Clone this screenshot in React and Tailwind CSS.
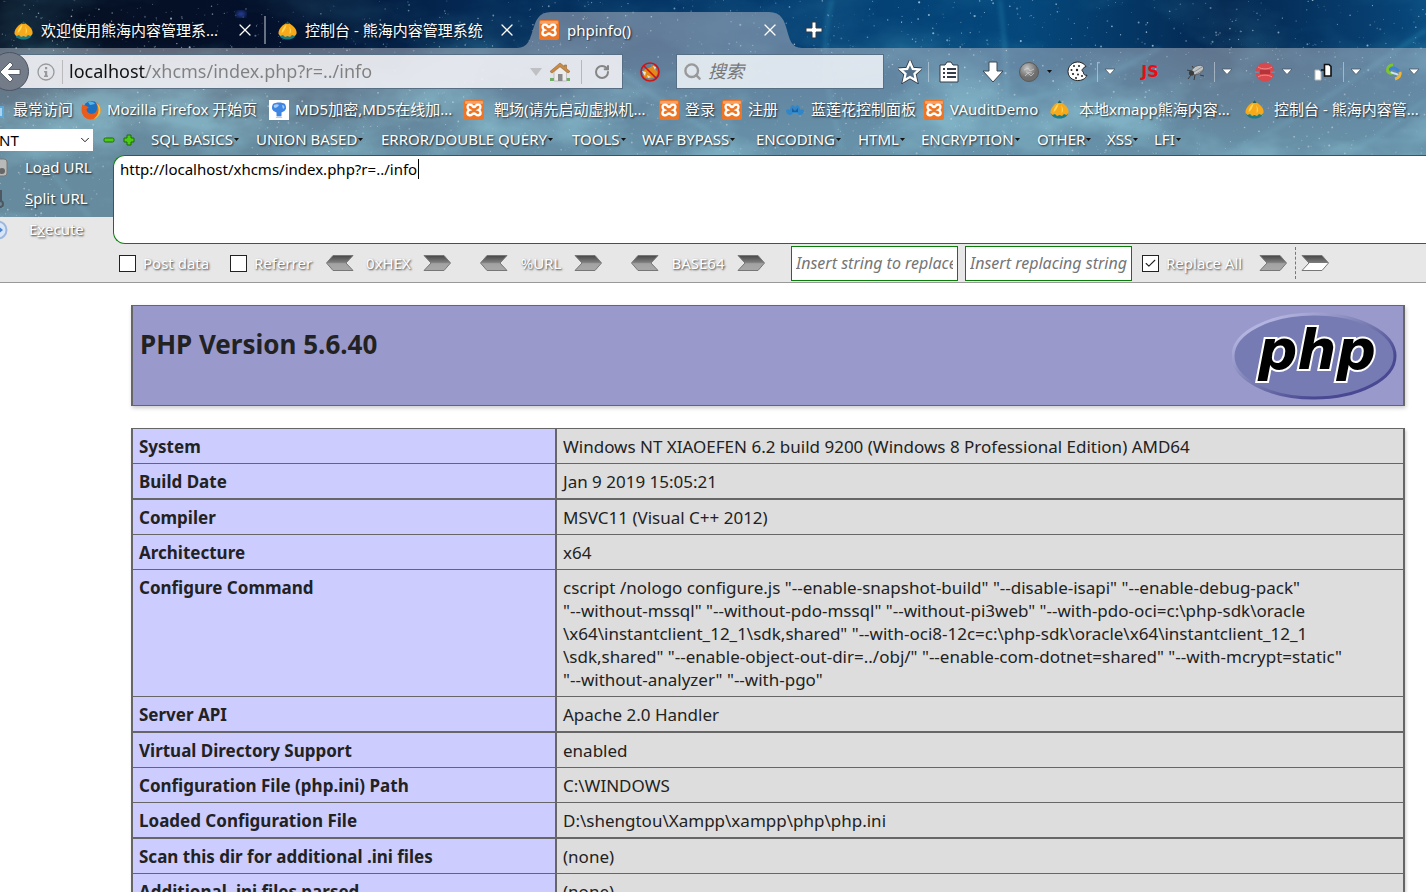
import React from 'react';
import clsx from 'clsx';
import { Search, RotateCw, X, ChevronDown, Check } from 'lucide-react';

const FONT = "font-['Noto_Sans','Noto_Sans_CJK_SC',sans-serif]";
const GLOW = 'text-white [text-shadow:1px_1px_2px_rgba(0,0,0,0.8)]';

const bookmarks = [
  { icon: 'page', label: '最常访问', width: 'w-[96px]' },
  { icon: 'firefox', label: 'Mozilla Firefox 开始页', width: 'w-[188px]' },
  { icon: 'md5', label: 'MD5加密,MD5在线加...', width: 'w-[195px]' },
  { icon: 'xampp', label: '靶场(请先启动虚拟机...', width: 'w-[195px]', wide: true },
  { icon: 'xampp', label: '登录', width: 'w-[63px]' },
  { icon: 'xampp', label: '注册', width: 'w-[63px]' },
  { icon: 'lotus', label: '蓝莲花控制面板', width: 'w-[139px]' },
  { icon: 'xampp', label: 'VAuditDemo', width: 'w-[126px]' },
  { icon: 'bear', label: '本地xmapp熊海内容...', width: 'w-[195px]', wide: true },
  { icon: 'bear', label: '控制台 - 熊海内容管...', width: 'w-[195px]', wide: true },
];

const menus = [
  { label: 'SQL BASICS', width: 'w-[105px]' },
  { label: 'UNION BASED', width: 'w-[125px]' },
  { label: 'ERROR/DOUBLE QUERY', width: 'w-[191px]' },
  { label: 'TOOLS', width: 'w-[70px]' },
  { label: 'WAF BYPASS', width: 'w-[114px]' },
  { label: 'ENCODING', width: 'w-[102px]' },
  { label: 'HTML', width: 'w-[63px]' },
  { label: 'ENCRYPTION', width: 'w-[116px]' },
  { label: 'OTHER', width: 'w-[70px]' },
  { label: 'XSS', width: 'w-[47px]' },
  { label: 'LFI', width: 'w-[47px]' },
];

const info = [
  { name: 'System', value: ['Windows NT XIAOEFEN 6.2 build 9200 (Windows 8 Professional Edition) AMD64'] },
  { name: 'Build Date', value: ['Jan 9 2019 15:05:21'] },
  { name: 'Compiler', value: ['MSVC11 (Visual C++ 2012)'], thick: true },
  { name: 'Architecture', value: ['x64'] },
  {
    name: 'Configure Command',
    value: [
      'cscript /nologo configure.js "--enable-snapshot-build" "--disable-isapi" "--enable-debug-pack"',
      '"--without-mssql" "--without-pdo-mssql" "--without-pi3web" "--with-pdo-oci=c:\\php-sdk\\oracle',
      '\\x64\\instantclient_12_1\\sdk,shared" "--with-oci8-12c=c:\\php-sdk\\oracle\\x64\\instantclient_12_1',
      '\\sdk,shared" "--enable-object-out-dir=../obj/" "--enable-com-dotnet=shared" "--with-mcrypt=static"',
      '"--without-analyzer" "--with-pgo"',
    ],
  },
  { name: 'Server API', value: ['Apache 2.0 Handler'] },
  { name: 'Virtual Directory Support', value: ['enabled'], thick: true },
  { name: 'Configuration File (php.ini) Path', value: ['C:\\WINDOWS'] },
  { name: 'Loaded Configuration File', value: ['D:\\shengtou\\Xampp\\xampp\\php\\php.ini'] },
  { name: 'Scan this dir for additional .ini files', value: ['(none)'], thick: true },
  { name: 'Additional .ini files parsed', value: ['(none)'] },
];

// small seeded generator so the sky is the same on every load
const makeStars = (count) => {
  let seed = 7;
  const rand = () => {
    seed = (seed * 16807) % 2147483647;
    return seed / 2147483647;
  };
  return Array.from({ length: count }, () => ({
    x: rand() * 1426,
    y: rand() * 217,
    r: 0.4 + rand() * rand() * 0.8,
    o: 0.15 + rand() * 0.6,
  }));
};
const stars = makeStars(2600);

const Sky = () => (
  <svg
    className="absolute inset-x-0 top-0 h-[217px] w-full"
    viewBox="0 0 1426 217"
    preserveAspectRatio="xMidYMin slice"
    aria-hidden="true"
  >
    <defs>
      <linearGradient id="sky" x1="0" x2="1" y1="0" y2="0">
        <stop offset="0" stopColor="#071022" />
        <stop offset=".18" stopColor="#04102a" />
        <stop offset=".34" stopColor="#042a56" />
        <stop offset=".55" stopColor="#043c70" />
        <stop offset=".72" stopColor="#05487c" />
        <stop offset=".86" stopColor="#04264f" />
        <stop offset="1" stopColor="#08487c" />
      </linearGradient>
      <linearGradient id="low" x1="0" x2="0" y1="0" y2="1">
        <stop offset=".2" stopColor="#167090" stopOpacity="0" />
        <stop offset=".65" stopColor="#167090" stopOpacity=".75" />
      </linearGradient>
      <linearGradient id="fade" x1="0" x2="0" y1="0" y2="1">
        <stop offset=".15" stopColor="#fff" stopOpacity=".2" />
        <stop offset=".5" stopColor="#fff" />
      </linearGradient>
      <mask id="lower">
        <rect width="1426" height="217" fill="url(#fade)" />
      </mask>
      <filter id="cloud" x="0" y="0" width="100%" height="100%">
        <feTurbulence type="fractalNoise" baseFrequency=".008 .014" numOctaves="5" seed="11" />
        <feColorMatrix values="0 0 0 0 .12  0 0 0 0 .6  0 0 0 0 .76  3 0 0 0 -1.3" />
      </filter>
      <filter id="soft">
        <feGaussianBlur stdDeviation="2" />
      </filter>
    </defs>
    <rect width="1426" height="217" fill="url(#sky)" />
    <rect width="1426" height="217" fill="url(#low)" />
    <g mask="url(#lower)">
      <rect width="1426" height="217" filter="url(#cloud)" opacity=".65" />
    </g>
    <g filter="url(#soft)" fill="none" stroke="#3fb6d8" strokeWidth="3" opacity=".3">
      <path d="M1000 0c4 40 10 80 4 150" />
      <path d="M832 0c-14 50-4 90 10 150" />
      <path d="M1426 30c-60 40-110 80-200 125" />
      <path d="M1426 100c-30 20-50 40-80 55" />
      <path d="M610 60c40 40 90 60 130 95" />
      <path d="M0 120c30 30 60 60 90 97" />
      <path d="M960 110c90-10 140-30 200-62" />
    </g>
    <ellipse cx="241" cy="14" rx="5" ry="3" fill="#3552c8" opacity=".8" filter="url(#soft)" />
    {stars.map((s, i) => (
      <circle key={i} cx={s.x} cy={s.y} r={s.r} fill="#cfe6f5" opacity={s.o} />
    ))}
  </svg>
);

const BearIcon = () => (
  <svg className="size-[19px] shrink-0" viewBox="0 0 19 19">
    <path d="M1 12c1-1 16-1 17 0 0 4-3 6.500-8.500 6.500S1 16 1 12z" fill="#1c7d86" />
    <path d="M9 2 11 2l4 3c3 3 4 5 3.500 8l-2 2-2.500-1-2 2-2.500-1L7 16l-2-2-2.500 1L.5 13C0 10 2 7 4.500 4.500L7.500 2.500z" fill="#f6a91b" />
    <path d="M8 4c-3 2-4 5-4.500 8 2-1 4-4 5-8zM11 5c1 2 1 5 .5 8 2-1 2-5-.5-8z" fill="#ffd957" />
    <path d="M7.500 3 9.500.3 11.800 3z" fill="#20605c" />
  </svg>
);

const XamppIcon = () => (
  <svg className="size-5 shrink-0" viewBox="0 0 20 20">
    <rect width="20" height="20" rx="2" fill="#ee7523" />
    <rect x="1" y="1" width="18" height="3" rx="1" fill="#f5a067" />
    <path
      d="M7.500 5C4.500 4 3 5.500 3.700 8c.3 1 1 1.600 1.800 2-2.600 1-2.900 4.700 0 5.200 2.500.4 2.600-1.700 4.500-1.700s2 2.100 4.500 1.700c2.900-.5 2.600-4.200 0-5.200.8-.4 1.500-1 1.800-2 .7-2.500-.8-4-3.800-3C11.300 5.500 11.500 7 10 7S8.700 5.500 7.500 5z"
      fill="none"
      stroke="#fff"
      strokeWidth="2.400"
    />
  </svg>
);

const FirefoxIcon = () => (
  <svg className="size-5 shrink-0" viewBox="0 0 20 20">
    <circle cx="10.500" cy="9" r="8" fill="#1d6fc0" />
    <path d="M7 2c3-1 6 0 7 2-2 0-3 1-5 1z" fill="#52b4e8" />
    <path d="M1.500 4c.5 1 1.500 1.500 3 1.500L8 7.500 5.500 9c0 4 4 5.500 7 4.500 3-1 4-4 3.500-7 0-2-1-3.500-2-4.500 4 1.500 6 5 5.500 9-.5 5-5 8.500-10 8.500C4.500 19.500.5 15 .5 10c0-2 .3-4 1-6z" fill="#ea5b1c" />
    <path d="M15 2.500c3.500 2 5 5 4.500 9-.5 4-4 7-7 7.500 3-2 5-5 5-9 0-3-1-5.500-2.500-7.500z" fill="#fbc02d" />
  </svg>
);

const Md5Icon = () => (
  <svg className="size-5 shrink-0" viewBox="0 0 20 20">
    <rect width="20" height="20" fill="#fff" />
    <path d="M4 4c3-2 9-2 12 0 1.500 3 1.500 5-.5 7l-3 1.500V16h-5v-3.500L4.500 11C2.500 9 2.500 7 4 4z" fill="#3f86e4" />
    <path d="M5 5c2-1 4-1 5 0-1 2-3 3-4 3-1-.5-1.500-1.500-1-3zM13 5c1.500 0 2.500 1 2.500 2.500L14 9z" fill="#a9cbf7" />
    <path d="M8 16h4l1.500 2h-7z" fill="#b9cfe8" />
  </svg>
);

const LotusIcon = () => (
  <svg className="size-5 shrink-0" viewBox="0 0 20 20">
    <path d="M1 10c2-1 3-1 4 0 0-3 1-4 3-5l2 2 2-2c2 1 3 2 3 5 1-1 2-1 4 0 0 3-2 5-5 5l-2-2H8l-2 2c-3 0-5-2-5-5z" fill="#2f86c9" />
    <path d="M7 8l3 3 3-3v4H7z" fill="#1b5f9f" />
  </svg>
);

const PageIcon = () => (
  <svg className="size-5 shrink-0" viewBox="0 0 20 20">
    <path d="M4 2h11v4h4v12H4z" fill="#5ea5d8" />
    <path d="M9 8h8v8H9z" fill="#a9d4f0" />
  </svg>
);

const siteIcons = {
  bear: BearIcon,
  xampp: XamppIcon,
  firefox: FirefoxIcon,
  md5: Md5Icon,
  lotus: LotusIcon,
  page: PageIcon,
};

const SiteIcon = ({ name }) => {
  const Icon = siteIcons[name];
  return <Icon />;
};

const Tab = ({ icon, label, className }) => (
  <div className={clsx('flex h-9 items-center', className)}>
    <SiteIcon name={icon} />
    <button className={clsx('ml-2 flex-1 truncate text-left text-[15px]', GLOW)}>{label}</button>
    <button aria-label="Close tab" className="text-white">
      <X size={20} strokeWidth={1.500} />
    </button>
  </div>
);

const TabStrip = () => (
  <div className="flex h-12 items-end">
    <Tab icon="bear" label="欢迎使用熊海内容管理系..." className="w-[255px] pl-3.5" />
    <div className="mb-1 ml-[9px] h-7 w-0.5 bg-white/40" />
    <Tab icon="bear" label="控制台 - 熊海内容管理系统" className="w-[251px] pl-3" />
    <div className="relative h-9 w-[285px]">
      <svg className="absolute inset-0" width="285" height="36" viewBox="0 0 285 36" aria-hidden="true">
        <path d="M0 36C22 36 9 0 34 0H252C277 0 264 36 285 36z" fill="#bcbec8" fillOpacity=".5" />
      </svg>
      <Tab icon="xampp" label="phpinfo()" className="relative mr-[22px] pl-[22px]" />
    </div>
    <button aria-label="New tab" className="flex h-9 w-6 items-center justify-center">
      <svg width="20" height="20" viewBox="0 0 20 20">
        <path d="M8 2h4v6h6v4h-6v6H8v-6H2V8h6z" fill="#fff" stroke="#333a44" strokeWidth="1" />
      </svg>
    </button>
  </div>
);

const Divider = () => <div className="h-5 w-px shrink-0 bg-white/40" />;

const ToolButton = ({ label, className, children }) => (
  <button aria-label={label} className={clsx('flex h-9 shrink-0 items-center justify-center', className)}>
    {children}
  </button>
);

const DropArrow = ({ className }) => (
  <ToolButton label="Show menu" className={className}>
    <svg width="12" height="8" viewBox="0 0 12 8">
      <path d="M1 1h10L6 6.500z" fill="#fff" stroke="#4a5563" strokeWidth=".8" />
    </svg>
  </ToolButton>
);

const NavBar = () => (
  <div className="flex h-[47px] items-center">
    <button
      aria-label="Back"
      className="relative z-10 -ml-[10px] flex size-[39px] shrink-0 items-center justify-center rounded-full border border-[#4b5462] bg-[#747c89]"
    >
      <svg width="22" height="22" viewBox="0 0 22 22">
        <path d="M11 1 1 11l10 10 3-3-4.500-4.500H21v-5H9.500L14 4z" fill="#fff" stroke="#3f4853" strokeWidth=".8" />
      </svg>
    </button>
    <div className="-ml-[13px] flex h-[35px] min-w-0 flex-1 items-center border border-[#566f85] bg-[#f0f0f4]/90 pl-[19px]">
      <svg className="shrink-0" width="20" height="20" viewBox="0 0 20 20">
        <circle cx="10" cy="10" r="8" fill="none" stroke="#999" strokeWidth="1.300" />
        <path d="M9 5h2.200v2.200H9zM8 9h3.200v4.500H12V15H8v-1.500h1V10.500H8z" fill="#999" />
      </svg>
      <div className="ml-1.5 h-6 w-px shrink-0 bg-[#bbb]" />
      <input
        aria-label="Address"
        className="ml-1.5 min-w-0 flex-1 bg-[linear-gradient(to_right,#111_77px,#808080_77px)] bg-clip-text text-[18px] text-transparent outline-none"
        defaultValue="localhost/xhcms/index.php?r=../info"
      />
      <svg className="shrink-0" width="12" height="8" viewBox="0 0 12 8">
        <path d="M0 0h12L6 8z" fill="#bfc0c4" />
      </svg>
      <button aria-label="Home" className="ml-2 shrink-0">
        <svg width="21" height="20" viewBox="0 0 21 20">
          <path d="M0 16h20v3H0z" fill="#6fae63" />
          <path d="M4 10 10 5l6.500 5v9H4z" fill="#ececec" stroke="#aaa" strokeWidth=".6" />
          <path d="M8 12h4.500v7H8z" fill="#8a8a8a" />
          <path d="M10 1 0 9.500l2 1.500 8-6.500 8 6.500 2-1.500-3.500-3V3h-2v1.500z" fill="#c98b45" stroke="#9a6327" strokeWidth=".6" />
        </svg>
      </button>
      <div className="ml-2.5 h-6 w-px shrink-0 bg-[#b5b8bd]" />
      <button aria-label="Reload" className="mx-3 shrink-0 text-[#858585]">
        <RotateCw size={16} strokeWidth={3} />
      </button>
    </div>
    <ToolButton label="Fox blocker" className="w-[53px]">
      <svg width="20" height="20" viewBox="0 0 20 20">
        <path d="M3 11c0-3 3-5 6-5l5-3 1 4c3 2 3 5 1 7-3 3-9 3-12 1z" fill="#e58a1a" />
        <path d="M2 9l4 1-1 4zM13 4l3 1-1 3zM7 13l4 2-3 1z" fill="#f5e7d0" />
        <circle cx="10" cy="10" r="9" fill="none" stroke="#d01414" strokeWidth="1.600" />
        <path d="M3.500 3.500 16.500 16.500" stroke="#d01414" strokeWidth="1.600" />
      </svg>
    </ToolButton>
    <label className="flex h-[35px] w-[208px] shrink-0 items-center border border-[#566f85] bg-[#eaf0f5]/90 pl-1.5 text-[#999]">
      <Search size={19} strokeWidth={3} />
      <input
        aria-label="搜索"
        placeholder="搜索"
        className="ml-1.5 w-40 bg-transparent text-[18px] italic outline-none placeholder:text-[#777]"
      />
    </label>
    <div className="flex h-9 shrink-0 items-center pl-2 pr-0.5">
      <ToolButton label="Bookmark this page" className="w-9">
        <svg width="24" height="24" viewBox="0 0 24 24">
          <path d="m12 2.500 2.800 6.300 6.700.6-5 4.500 1.500 6.700-6-3.600-6 3.600 1.500-6.700-5-4.500 6.700-.6z" fill="none" stroke="#333c48" strokeWidth="4" />
          <path d="m12 2.500 2.800 6.300 6.700.6-5 4.500 1.500 6.700-6-3.600-6 3.600 1.500-6.700-5-4.500 6.700-.6z" fill="#53708a" stroke="#fff" strokeWidth="2.300" />
        </svg>
      </ToolButton>
      <Divider />
      <ToolButton label="Bookmarks list" className="w-10">
        <svg width="22" height="22" viewBox="0 0 22 22">
          <path d="M2 4h5l2-3h4l2 3h5v17H2z" fill="#fff" stroke="#333c48" />
          <path d="M5 7h2v2H5zM9 7h9v2H9zM5 11h2v2H5zM9 11h9v2H9zM5 15h2v2H5zM9 15h9v2H9z" fill="#333c48" />
        </svg>
      </ToolButton>
      <ToolButton label="Downloads" className="w-12">
        <svg width="22" height="22" viewBox="0 0 22 22">
          <path d="M7 1h8v9h6L11 21 1 10h6z" fill="#fff" stroke="#3d4854" />
        </svg>
      </ToolButton>
      <ToolButton label="Proxy" className="w-6">
        <svg width="20" height="20" viewBox="0 0 20 20">
          <defs>
            <radialGradient id="ball" cx=".4" cy=".3">
              <stop offset="0" stopColor="#c4c4c4" />
              <stop offset="1" stopColor="#6e6e6e" />
            </radialGradient>
          </defs>
          <circle cx="10" cy="10" r="9.500" fill="url(#ball)" stroke="#5a5a5a" />
          <path d="M5 8l4-2 2 3 4-2M6 14l3-3 3 3 3-3M7 10l6 1" stroke="#dcdcdc" fill="none" opacity=".6" />
        </svg>
      </ToolButton>
      <ToolButton label="Proxy menu" className="w-4">
        <svg width="5" height="3" viewBox="0 0 5 3">
          <path d="M0 0h5L2.500 3z" fill="#111" />
        </svg>
      </ToolButton>
      <ToolButton label="Cookies" className="w-10">
        <svg width="21" height="21" viewBox="0 0 21 21">
          <path d="M15 2C9-1 1 3 1 10.500S9 21.500 16 18.500c2-1 3.500-3 4-4.500-2 1-4-1-3.500-3-2-.5-2-3 0-3.500 0-1 1-1.500 2.500-2-1-1.500-2.500-3-4-3.500z" fill="#fff" stroke="#222" />
          <g fill="#222">
            <circle cx="7" cy="5" r="1" />
            <circle cx="12" cy="5" r="1" />
            <circle cx="4.500" cy="9" r="1" />
            <circle cx="10" cy="9" r="1.200" />
            <circle cx="6" cy="13" r="1.100" />
            <circle cx="11" cy="13.500" r="1" />
            <circle cx="9" cy="17" r="1" />
            <circle cx="15" cy="15" r="1" />
          </g>
        </svg>
      </ToolButton>
      <Divider />
      <DropArrow className="w-6" />
      <ToolButton label="Toggle JavaScript" className="w-14">
        <span className="font-['DejaVu_Sans',sans-serif] text-[16px] font-bold text-[#ee0a14]">JS</span>
      </ToolButton>
      <ToolButton label="Firebug" className="w-9">
        <svg width="20" height="18" viewBox="0 0 20 18">
          <path d="M2 16l3-4M8 17l1-5M14 12l4 1M1 7l4 1M6 3l3 4" stroke="#333" strokeWidth=".9" fill="none" />
          <ellipse cx="11.500" cy="7" rx="6.500" ry="4" transform="rotate(-28 11.500 7)" fill="#c0c4c7" stroke="#555" strokeWidth=".7" />
          <path d="M8 9l8-5M10 11l7-4" stroke="#777" strokeWidth=".7" />
          <circle cx="5.500" cy="10" r="2.600" fill="#3a3c3e" />
        </svg>
      </ToolButton>
      <Divider />
      <DropArrow className="w-6" />
      <ToolButton label="Block content" className="ml-3 w-7">
        <svg width="20" height="20" viewBox="0 0 20 20">
          <circle cx="10" cy="10" r="9.500" fill="#d8484c" />
          <path d="M0 9.500h4v1.500H0zM20 9.500h-4v1.500h4" fill="#6d8ea6" />
          <path d="M3 5c4 2.500 10 2.500 14 0M3 15c4-2.500 10-2.500 14 0" stroke="#f08c8e" strokeWidth="1" fill="none" />
          <path d="M5 8h10v4H5z" fill="#b5343a" />
        </svg>
      </ToolButton>
      <DropArrow className="w-4" />
      <ToolButton label="Copy link" className="ml-2 w-10">
        <svg width="18" height="18" viewBox="0 0 18 18">
          <path d="M1 7h4l2 2v8H1z" fill="#fff" stroke="#b9b9b9" />
          <path d="M10.500 1.500H15l2 2V13h-6.500z" fill="#fff" stroke="#111" strokeWidth="1.600" />
          <path d="M7 7h3" stroke="#111" strokeWidth="1.500" />
        </svg>
      </ToolButton>
      <Divider />
      <DropArrow className="w-6" />
      <ToolButton label="Sync" className="ml-4 w-5">
        <svg width="18" height="18" viewBox="0 0 18 18" fill="none" strokeWidth="3">
          <path d="M8 2C4 2 2 5 2.500 8c1 2 3 2.500 5 2" stroke="#7cc628" />
          <path d="M5 7c1-2 4-3 6-1l3 2" stroke="#3a83d8" />
          <path d="M15 9c1 3-1 6-5 7" stroke="#f2b632" />
          <path d="M6 9c2 2 5 1 7 3" stroke="#cde1f3" strokeWidth="2" />
        </svg>
      </ToolButton>
      <DropArrow className="w-5" />
    </div>
  </div>
);

const BookmarksBar = () => (
  <nav className="-ml-[15px] flex h-[29px] items-center overflow-hidden">
    {bookmarks.map((b, i) => (
      <a
        key={i}
        href="#"
        className={clsx('flex shrink-0 items-center whitespace-nowrap text-[15px]', b.width, b.wide ? 'gap-2.5' : 'gap-1.5', i === 0 && 'gap-2', GLOW)}
      >
        <SiteIcon name={b.icon} />
        {b.label}
      </a>
    ))}
  </nav>
);

const HackMenu = () => (
  <div className="flex h-[31px] items-center">
    <div className="relative -ml-2 h-[22px] w-[101px] shrink-0">
      <select aria-label="Injection type" className="block h-full w-full appearance-none bg-white pl-0.5 text-[15px] leading-[22px] text-black">
        <option>INT</option>
      </select>
      <ChevronDown size={14} strokeWidth={1.500} className="pointer-events-none absolute right-px top-1" />
    </div>
    <button aria-label="Remove" className="ml-2.5 mr-2">
      <svg width="12" height="12" viewBox="0 0 12 12">
        <rect x="1" y="4" width="10" height="4" rx="1.500" fill="#4ccc10" stroke="#1d6d08" />
      </svg>
    </button>
    <button aria-label="Add" className="mr-4">
      <svg width="12" height="12" viewBox="0 0 12 12">
        <path d="M4 1h4v3h3v4H8v3H4V8H1V4h3z" fill="#4ccc10" stroke="#1d6d08" />
      </svg>
    </button>
    {menus.map((m) => (
      <button key={m.label} className={clsx('flex shrink-0 items-center whitespace-nowrap text-[15px]', m.width, GLOW)}>
        {m.label}
        <svg className="ml-px" width="5" height="3" viewBox="0 0 5 3">
          <path d="M0 0h5L2.500 3z" fill="#111" />
        </svg>
      </button>
    ))}
  </div>
);

const SideAction = ({ icon, children, className }) => (
  <button className={clsx('flex h-[31px] items-center text-[15px]', GLOW)}>
    <span className="-ml-3 w-5 shrink-0">{icon}</span>
    <span className={className}>{children}</span>
  </button>
);

const SideActions = () => (
  <div className="-mb-px -mt-[3px] flex w-[113px] shrink-0 flex-col">
    <SideAction
      className="ml-[17px]"
      icon={
        <svg width="20" height="20" viewBox="0 0 20 20">
          <rect x="4" y="1" width="15" height="17" rx="3" fill="#b9b9b9" stroke="#777" />
          <circle cx="14" cy="13" r="3" fill="#666" />
        </svg>
      }
    >
      Lo<u>a</u>d URL
    </SideAction>
    <SideAction
      className="ml-[17px]"
      icon={
        <svg width="20" height="20" viewBox="0 0 20 20" fill="none" stroke="#4d5860" strokeWidth="2">
          <path d="M13 1v11" />
          <circle cx="12" cy="15" r="3" />
        </svg>
      }
    >
      <u>S</u>plit URL
    </SideAction>
    <SideAction
      className="ml-[21px]"
      icon={
        <svg width="20" height="20" viewBox="0 0 20 20">
          <circle cx="10" cy="10" r="8.500" fill="#d9e6f7" stroke="#9db8de" strokeWidth="2" />
          <path d="M10 6l5 4-5 4z" fill="#4d86d0" />
        </svg>
      }
    >
      E<u>x</u>ecute
    </SideAction>
  </div>
);

const ArrowShades = () => (
  <svg className="absolute size-0" aria-hidden="true">
    <defs>
      <linearGradient id="steel" x1="0" x2="0" y1="0" y2="1">
        <stop offset="0" stopColor="#474747" />
        <stop offset=".45" stopColor="#7c7c7c" />
        <stop offset=".55" stopColor="#a3a3a3" />
        <stop offset="1" stopColor="#a8a8a8" />
      </linearGradient>
      <linearGradient id="steelLight" x1="0" x2="0" y1="0" y2="1">
        <stop offset="0" stopColor="#474747" />
        <stop offset=".48" stopColor="#7c7c7c" />
        <stop offset=".52" stopColor="#fff" />
        <stop offset="1" stopColor="#fff" />
      </linearGradient>
    </defs>
  </svg>
);

const Arrow = ({ label, flip, light }) => (
  <button aria-label={label} className="shrink-0">
    <svg className={flip ? '-scale-x-100' : ''} width="28" height="16" viewBox="0 0 28 16">
      <path d="M1 .5h20L27.500 8 21 15.500H1L8 8z" fill={light ? 'url(#steelLight)' : 'url(#steel)'} stroke="#777" />
    </svg>
  </button>
);

const EMBOSS = 'text-[15px] text-white [text-shadow:1px_1px_2px_rgba(0,0,0,0.75)]';

const CheckField = ({ label, checked, className }) => (
  <label className={clsx('flex shrink-0 items-center gap-[7px]', EMBOSS, className)}>
    <span className="relative flex size-[17px]">
      <input type="checkbox" defaultChecked={checked} className="size-[17px] appearance-none border border-[#222] bg-white" />
      {checked && <Check size={13} strokeWidth={2} className="pointer-events-none absolute left-0.5 top-0.5 text-[#222]" />}
    </span>
    {label}
  </label>
);

const Encoder = ({ label, className }) => (
  <div className={clsx('flex shrink-0 items-center justify-between', className)}>
    <Arrow label={`Decode ${label}`} flip />
    <span className={EMBOSS}>{label}</span>
    <Arrow label={`Encode ${label}`} />
  </div>
);

const REPLACE_BOX =
  'h-[35px] w-[167px] shrink-0 border border-[#0a7d0a] bg-white px-1 text-[16px] italic outline-none placeholder:text-[#757575]';

const HackOptions = () => (
  <div className="flex h-[39px] items-center overflow-hidden border-b border-[#999] pl-[119px]">
    <ArrowShades />
    <CheckField label="Post data" className="w-[111px]" />
    <CheckField label="Referrer" className="w-24" />
    <Encoder label="0xHEX" className="w-[125px]" />
    <Encoder label="%URL" className="ml-[29px] w-[122px]" />
    <Encoder label="BASE64" className="ml-[29px] w-[134px]" />
    <input aria-label="String to replace" placeholder="Insert string to replace" className={clsx('ml-[26px]', REPLACE_BOX)} />
    <input aria-label="Replacing string" placeholder="Insert replacing string" className={clsx('ml-[7px]', REPLACE_BOX)} />
    <CheckField label="Replace All" checked className="ml-2.5 w-[117px]" />
    <Arrow label="Replace" />
    <div className="ml-2 mr-[5px] h-8 shrink-0 border-l border-dashed border-[#777]" />
    <Arrow label="Replace next" light />
  </div>
);

const PhpLogo = () => (
  <svg width="165" height="92" viewBox="0 0 165 92" role="img" aria-label="PHP logo">
    <defs>
      <linearGradient id="rim" x1="0" y1="0" x2="1" y2="1">
        <stop offset=".15" stopColor="#b4b4e0" />
        <stop offset=".5" stopColor="#7377ad" />
        <stop offset=".75" stopColor="#484893" />
      </linearGradient>
    </defs>
    <ellipse cx="82" cy="46" rx="81" ry="42" fill="#777bb3" stroke="url(#rim)" strokeWidth="3" />
    <text
      x="26"
      y="59"
      fontFamily="DejaVu Sans"
      fontSize="55"
      fontWeight="bold"
      fontStyle="italic"
      fill="#000"
      stroke="#fff"
      strokeWidth="4"
      paintOrder="stroke"
    >
      php
    </text>
  </svg>
);

const PhpInfo = () => (
  <main className="ml-[131px] mr-[21px] pt-[22px] text-[#222]">
    <div className="flex h-[101px] justify-between border-x-2 border-y border-[#666] bg-[#9999cc] pl-[7px] pr-1.5 pt-1 shadow-[1px_2px_4px_#ccc]">
      <h1 className="pt-4 text-[26px] font-bold leading-9">PHP Version 5.6.40</h1>
      <PhpLogo />
    </div>
    <table className="mt-[22px] w-full border-separate border-spacing-0 border-r-2 border-[#666] text-[17px] leading-[23px] shadow-[1px_2px_3px_#ccc]">
      <tbody>
        {info.map((row) => (
          <tr key={row.name}>
            <th
              scope="row"
              className={clsx('w-1/3 border-l-2 border-[#666] bg-[#ccccff] px-1.5 pb-[5px] pt-1.5 text-left align-top font-bold', row.thick ? 'border-t-2' : 'border-t')}
            >
              {row.name}
            </th>
            <td className={clsx('border-l-2 border-[#666] bg-[#dddddd] px-1.5 pb-[5px] pt-1.5', row.thick ? 'border-t-2' : 'border-t')}>
              {row.value.map((line) => (
                <div key={line} className="whitespace-nowrap">{line}</div>
              ))}
            </td>
          </tr>
        ))}
      </tbody>
    </table>
  </main>
);

const App = () => (
  <div className={clsx('h-screen overflow-hidden bg-white', FONT)}>
    <header className="relative overflow-hidden bg-[#e7e7e7]">
      <Sky />
      <div className="absolute inset-x-0 top-12 h-[169px] bg-[#bcbec8]/50" />
      <div className="relative">
        <TabStrip />
        <NavBar />
        <BookmarksBar />
        <HackMenu />
        <div className="flex">
          <SideActions />
          <div className="relative flex-1">
            <textarea
              aria-label="URL"
              className="block h-[89px] w-full resize-none rounded-l-xl border border-r-0 border-[#0a7d0a] bg-white px-1.5 py-px text-[15px] leading-6 outline-none"
              defaultValue="http://localhost/xhcms/index.php?r=../info"
            />
            <span className="absolute left-[305px] top-1 h-5 w-px bg-black" />
          </div>
        </div>
        <HackOptions />
      </div>
    </header>
    <PhpInfo />
  </div>
);

export default App;
